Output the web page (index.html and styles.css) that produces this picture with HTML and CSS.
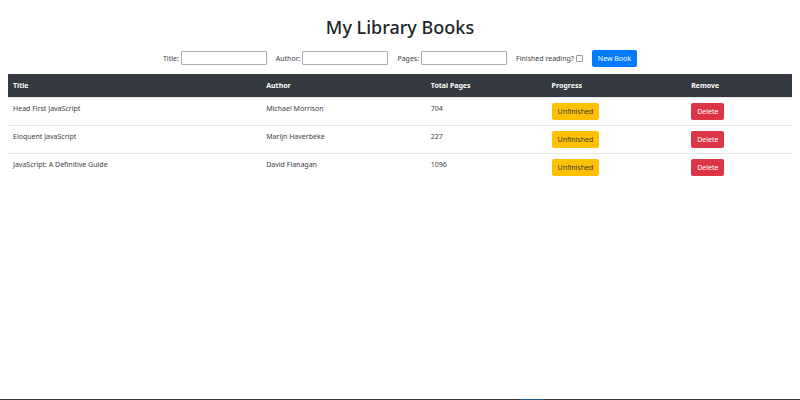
FILE: index.html
```html
<!DOCTYPE html>
<html lang="en">
<head>
<meta charset="utf-8">
<title>My Library Books</title>
<link rel="stylesheet" href="styles.css">
</head>
<body>
<main>
  <h1>My Library Books</h1>
  <form class="book-form">
    <div class="field"><label for="title">Title:</label><input class="text-box" id="title" type="text"></div>
    <div class="field"><label for="author">Author:</label><input class="text-box" id="author" type="text"></div>
    <div class="field"><label for="pages">Pages:</label><input class="text-box" id="pages" type="text"></div>
    <div class="field"><label for="finished">Finished reading?</label><input class="check" id="finished" type="checkbox"></div>
    <button class="btn btn-primary" type="button">New Book</button>
  </form>
  <table class="books">
    <colgroup><col class="col-title"><col class="col-author"><col class="col-pages"><col class="col-progress"><col></colgroup>
    <thead>
      <tr><th>Title</th><th>Author</th><th>Total Pages</th><th>Progress</th><th>Remove</th></tr>
    </thead>
    <tbody>
      <tr><td>Head First JavaScript</td><td>Michael Morrison</td><td>704</td><td><button class="btn btn-warning" type="button">Unfinished</button></td><td><button class="btn btn-danger" type="button">Delete</button></td></tr>
      <tr><td>Eloquent JavaScript</td><td>Marijn Haverbeke</td><td>227</td><td><button class="btn btn-warning" type="button">Unfinished</button></td><td><button class="btn btn-danger" type="button">Delete</button></td></tr>
      <tr><td>JavaScript: A Definitive Guide</td><td>David Flanagan</td><td>1096</td><td><button class="btn btn-warning" type="button">Unfinished</button></td><td><button class="btn btn-danger" type="button">Delete</button></td></tr>
    </tbody>
  </table>
</main>
<footer class="edge"></footer>
</body>
</html>
```

FILE: styles.css
```css
* {
  box-sizing: border-box;
}

body {
  display: flex;
  flex-direction: column;
  min-height: 100vh;
  margin: 0;
  background: #fff;
  color: #3c4146;
  font: 7px/11px "Noto Sans", "Open Sans", sans-serif;
}

main {
  flex: 1;
  padding: 15px 8px 0;
}

h1 {
  margin: 0 0 11px;
  color: #212529;
  font-size: 18px;
  font-weight: 500;
  line-height: 24px;
  text-align: center;
}

.book-form {
  display: flex;
  align-items: center;
  justify-content: center;
  gap: 9px;
  margin-bottom: 7px;
}

.field {
  display: flex;
  align-items: center;
  gap: 2px;
  padding-bottom: 1px;
}

.text-box {
  width: 86px;
  height: 14px;
  padding: 0 2px;
  border: 1px solid #aaa;
  border-radius: 1px;
  background: #fff;
  font: inherit;
}

.check {
  appearance: none;
  width: 7px;
  height: 7px;
  margin: 0;
  border: 1px solid #999;
  border-radius: 1px;
  background: #fff;
}

.check:checked {
  background: #007bff;
}

.btn {
  display: block;
  height: 17px;
  padding: 0 6px;
  border: 0;
  border-radius: 2px;
  font: inherit;
  cursor: pointer;
}

.btn-primary {
  background: #007bff;
  color: #fff;
}

.btn-warning {
  background: #ffc107;
  color: #3c3a24;
}

.btn-danger {
  background: #dc3545;
  color: #fff;
}

.books {
  width: 100%;
  border-collapse: separate;
  border-spacing: 0;
  table-layout: fixed;
}

.col-title { width: 32.3%; }
.col-author { width: 21%; }
.col-pages { width: 15.4%; }
.col-progress { width: 17.8%; }

th,
td {
  padding: 5px;
  text-align: left;
  vertical-align: top;
}

th {
  padding: 6px 5px;
  background: #343a40;
  color: #fff;
  font-weight: 700;
}

td {
  border-top: 1px solid #e6e9ec;
}

.edge {
  height: 1px;
  background: linear-gradient(to right, #343a40 65%, #1f5c8b 65%, #1f5c8b 68%, #343a40 68%);
}
```
